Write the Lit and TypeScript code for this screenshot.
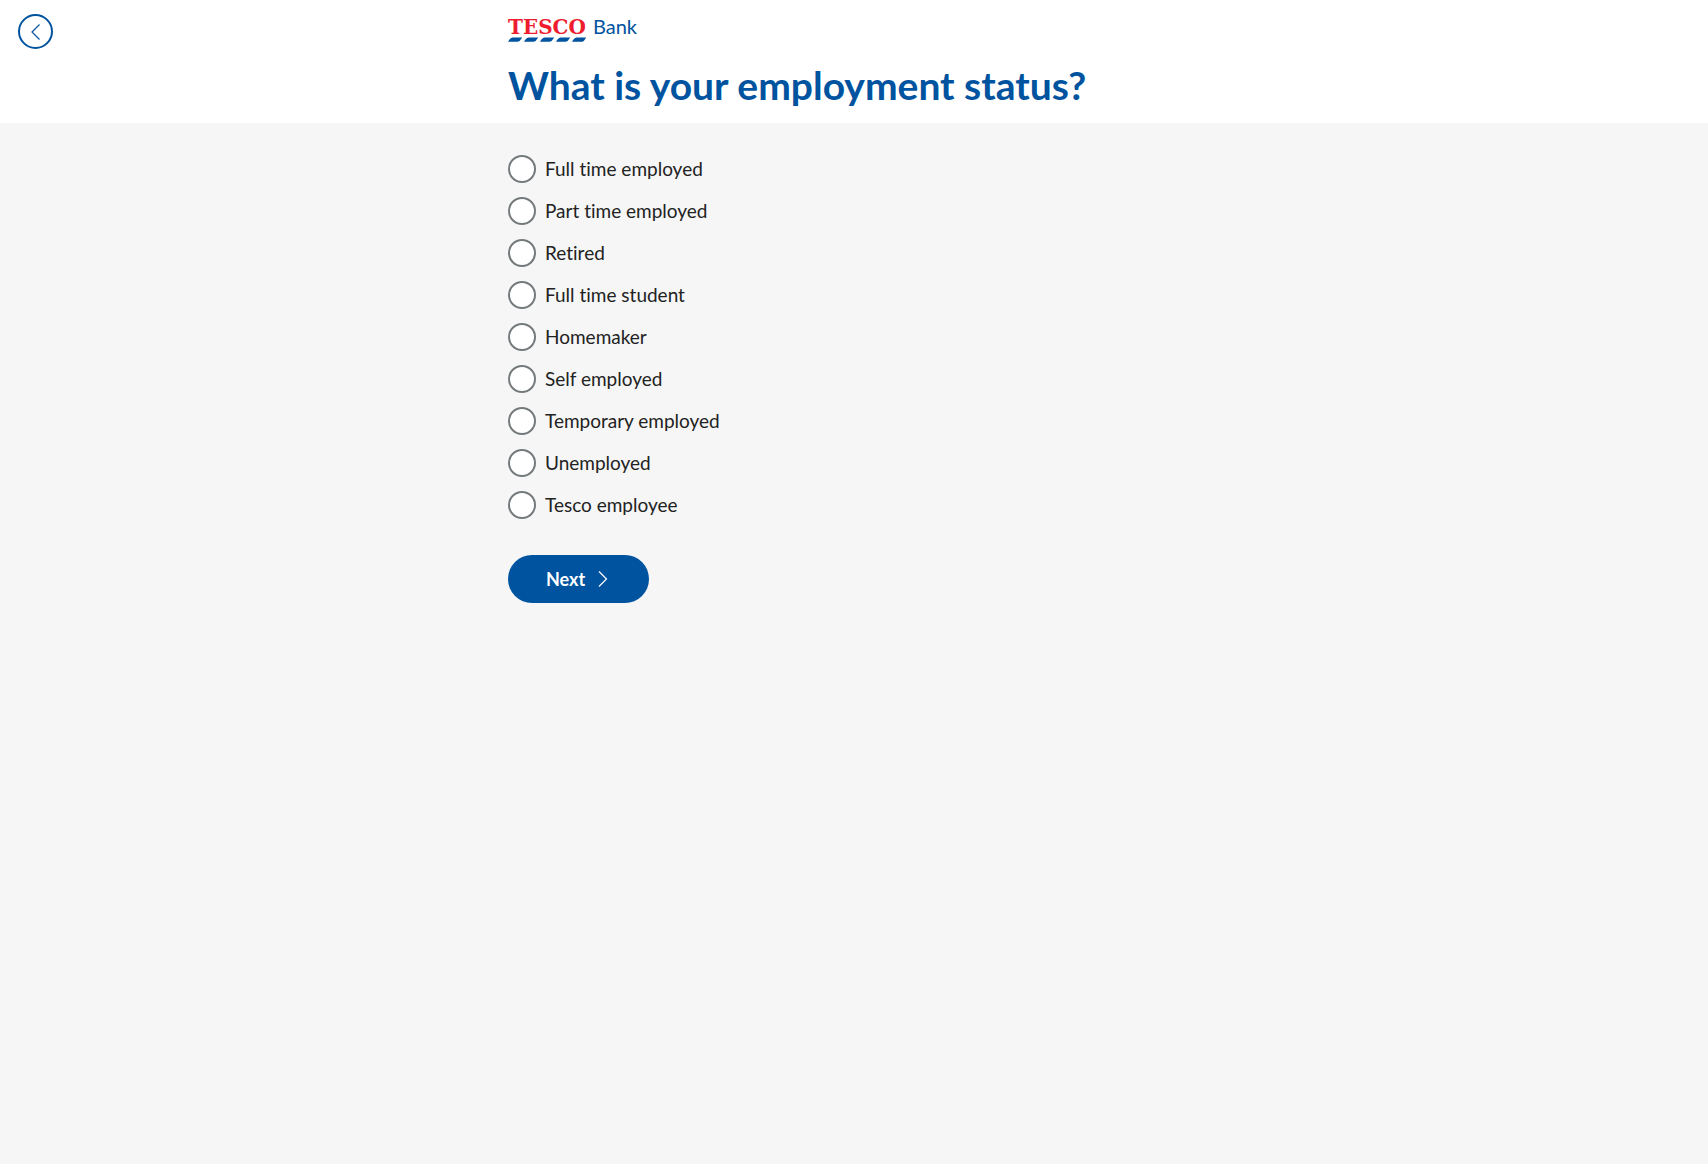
import { LitElement, html, svg, css } from "lit";
import { customElement, state } from "lit/decorators.js";

const OPTIONS = [
  "Full time employed",
  "Part time employed",
  "Retired",
  "Full time student",
  "Homemaker",
  "Self employed",
  "Temporary employed",
  "Unemployed",
  "Tesco employee",
];

const STRIPE_OFFSETS = [0, 16, 32, 48, 64];

@customElement("brand-logo")
export class BrandLogo extends LitElement {
  static styles = css`
    :host {
      display: flex;
      gap: 7px;
      align-items: flex-start;
      color: #00539f;
    }
    .mark {
      display: grid;
      width: 78px;
    }
    .name {
      font: 700 20px/19px "DejaVu Serif", serif;
      color: #ee1c2e;
    }
    .stripes {
      display: block;
      width: 78px;
      height: 5px;
      fill: #00539f;
    }
    .bank {
      font-size: 20px;
      line-height: 16px;
    }
  `;

  render() {
    return html`
      <div class="mark">
        <span class="name">TESCO</span>
        <svg class="stripes" viewBox="0 0 78 5" aria-hidden="true">
          ${STRIPE_OFFSETS.map(
            (x) => svg`<path
              transform="translate(${x} 0)"
              d="M0 4.8C1.2 3 2.4 .6 4.6 .6H14.4C12.8 1.8 12.4 4.8 9.4 4.8Z"
            />`
          )}
        </svg>
      </div>
      <span class="bank">Bank</span>
    `;
  }
}

@customElement("app-root")
export class AppRoot extends LitElement {
  @state() private status = "";

  static styles = css`
    :host {
      display: block;
      min-height: 100vh;
      background: #f6f6f6;
      color: #222;
      font-family: Lato, sans-serif;
      font-variant-ligatures: none;
    }
    .header {
      display: grid;
      grid-template-columns: 1fr minmax(0, 692px) 1fr;
      background: #fff;
      padding: 14px 0;
    }
    .back {
      display: grid;
      place-items: center;
      box-sizing: border-box;
      width: 35px;
      height: 35px;
      margin-left: 18px;
      padding: 0;
      border: 2px solid #00539f;
      border-radius: 50%;
      background: #fff;
      color: #00539f;
      cursor: pointer;
    }
    .chevron {
      display: block;
      width: 10px;
      height: 18px;
      fill: none;
      stroke: currentColor;
      stroke-width: 1.2;
    }
    .intro {
      padding-top: 4px;
    }
    .title {
      margin: 19px 0 0;
      font-size: 39px;
      line-height: 48px;
      font-weight: 700;
      color: #00539f;
    }
    .form {
      max-width: 692px;
      margin: 0 auto;
      padding-top: 25px;
    }
    .options {
      margin: 0;
      padding: 0;
      border: 0;
    }
    .option {
      display: flex;
      align-items: center;
      gap: 9px;
      width: fit-content;
      height: 42px;
      font-size: 19px;
      line-height: 24px;
      cursor: pointer;
    }
    .radio {
      appearance: none;
      box-sizing: border-box;
      width: 28px;
      height: 28px;
      margin: 0;
      border: 2px solid #74797c;
      border-radius: 50%;
      background: #fff;
      cursor: pointer;
    }
    .radio:checked {
      background: radial-gradient(circle, #00539f 7px, #fff 8px);
    }
    .next {
      display: flex;
      align-items: center;
      gap: 13px;
      width: 141px;
      height: 48px;
      margin-top: 29px;
      padding: 0 0 0 38px;
      border: 0;
      border-radius: 24px;
      background: #00539f;
      color: #fff;
      font: 700 18px/24px Lato, sans-serif;
      cursor: pointer;
    }
  `;

  render() {
    return html`
      <header class="header">
        <button class="back" type="button" aria-label="Back">
          <svg class="chevron" viewBox="0 0 10 18" aria-hidden="true">
            <path d="M8.5 1.5 1 9 8.5 16.5" />
          </svg>
        </button>
        <div class="intro">
          <brand-logo></brand-logo>
          <h1 class="title" id="question">What is your employment status?</h1>
        </div>
      </header>
      <form class="form" @submit=${(e: Event) => e.preventDefault()}>
        <fieldset class="options" aria-labelledby="question">
          ${OPTIONS.map(
            (label, i) => html`
              <label class="option" for="status-${i}">
                <input
                  class="radio"
                  type="radio"
                  name="status"
                  id="status-${i}"
                  .checked=${this.status === label}
                  @change=${() => (this.status = label)}
                />
                ${label}
              </label>
            `
          )}
        </fieldset>
        <button class="next" type="submit">
          Next
          <svg class="chevron" viewBox="0 0 10 18" aria-hidden="true">
            <path d="M1 1.5 8.5 9 1 16.5" />
          </svg>
        </button>
      </form>
    `;
  }
}
